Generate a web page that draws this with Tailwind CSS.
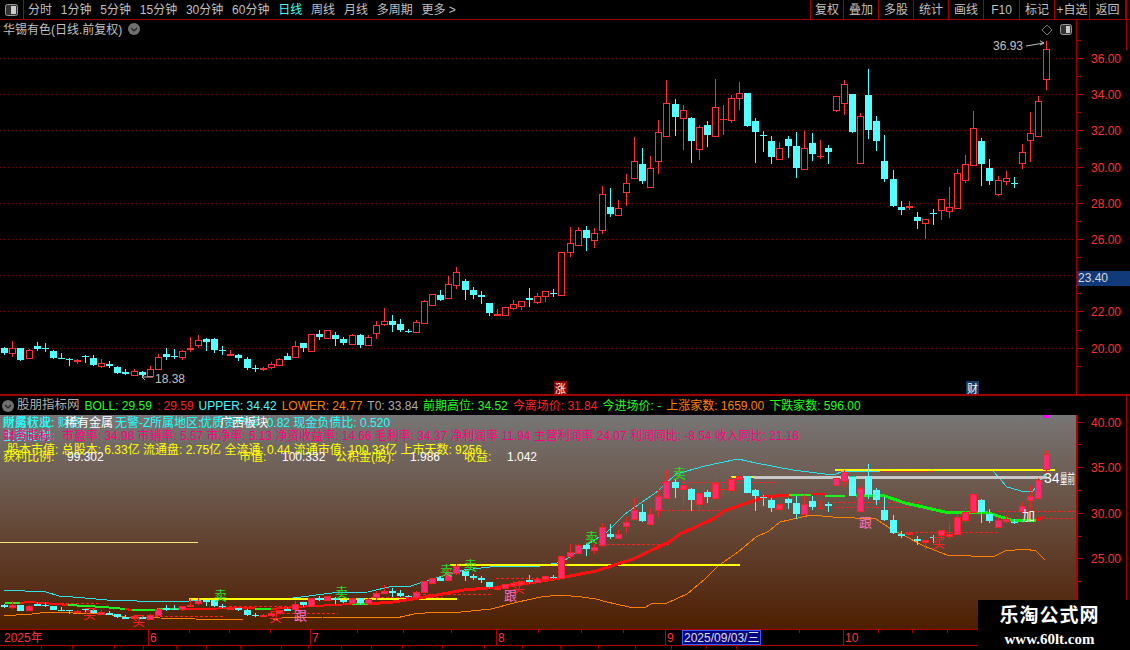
<!DOCTYPE html>
<html lang="zh">
<head>
  <meta charset="UTF-8" />
  <title>华锡有色 日线</title>
  <script src="https://cdn.jsdelivr.net/npm/@tailwindcss/browser@4"></script>
</head>
<body class="bg-black">
<div class="relative w-[1130px] h-[650px] overflow-hidden bg-black text-[#c0c0c0] text-xs [font-family:'Liberation_Sans','Noto_Sans_CJK_SC',sans-serif]">

  <!-- toolbar -->
  <header class="flex items-center h-5 border-b border-[#a00000]">
    <div class="flex items-center justify-center w-6 h-full border-r border-[#b00000]">
      <svg width="13" height="12" viewBox="0 0 13 12"><rect x="0.5" y="0.5" width="12" height="11" rx="2" fill="#333" stroke="#999"/><rect x="6" y="2" width="5" height="8" fill="#ccc"/></svg>
    </div>
    <nav class="flex items-center gap-[8.8px] pl-1 text-[12px]">
      <span>分时</span><span>1分钟</span><span>5分钟</span><span>15分钟</span><span>30分钟</span><span>60分钟</span>
      <span class="text-[#40ffff]">日线</span><span>周线</span><span>月线</span><span>多周期</span><span>更多 &gt;</span>
    </nav>
    <div class="flex items-center h-full ml-auto mr-[4px] text-[12px] border-l border-[#a00000]">
      <span class="w-[33px] h-full flex items-center justify-center border-r border-[#a00000]">复权</span>
      <span class="w-[35px] h-full flex items-center justify-center border-r border-[#a00000]">叠加</span>
      <span class="w-[35px] h-full flex items-center justify-center border-r border-[#a00000]">多股</span>
      <span class="w-[35px] h-full flex items-center justify-center border-r border-[#a00000]">统计</span>
      <span class="w-[35px] h-full flex items-center justify-center border-r border-[#a00000]">画线</span>
      <span class="w-[36px] h-full flex items-center justify-center border-r border-[#a00000]">F10</span>
      <span class="w-[35px] h-full flex items-center justify-center border-r border-[#a00000]">标记</span>
      <span class="w-[35px] h-full flex items-center justify-center border-r border-[#a00000]">+自选</span>
      <span class="w-[36px] h-full flex items-center justify-center border-r border-[#a00000]">返回</span>
    </div>
  </header>

  <!-- K line pane -->
  <section class="flex h-[376px] border-b-2 border-[#a00000]">
    <svg id="upper" class="w-[1076px] h-full shrink-0" viewBox="0 20 1076 374" shape-rendering="crispEdges">
      <g id="upperGrid"></g>
      <g id="upperCandles"></g>
      <g shape-rendering="auto">
        <text x="3" y="34" font-size="12" fill="#c0c0c0">华锡有色(日线.前复权)</text>
        <circle cx="134" cy="29" r="6" fill="#707070"/>
        <path d="M131 28l3 3 3-3" fill="none" stroke="#222" stroke-width="1.2"/>
        <path d="M1047 25l5 5-5 5-5-5z" fill="none" stroke="#777"/>
        <rect x="1060.5" y="24.5" width="11" height="10" rx="2" fill="#333" stroke="#999"/>
        <rect x="1066" y="26" width="4" height="7" fill="#ccc"/>
        <text x="993" y="50" font-size="12" fill="#c0c0c0">36.93</text>
        <path d="M1026 46l18-3M1040 41l4 2-4 2" fill="none" stroke="#c0c0c0"/>
        <text x="155" y="383" font-size="12" fill="#c0c0c0">18.38</text>
        <path d="M153 377h-11M145 374l-3 3 3 3" fill="none" stroke="#c0c0c0"/>
        <rect x="554" y="381" width="13" height="14" fill="#8b0000"/>
        <text x="555" y="393" font-size="11" fill="#fff">涨</text>
        <rect x="966" y="381" width="13" height="14" fill="#123a66"/>
        <text x="967" y="393" font-size="11" fill="#fff">财</text>
      </g>
    </svg>
    <svg id="upperAxis" class="w-[54px] h-full shrink-0 border-l border-[#a00000]" viewBox="1077 20 53 374" shape-rendering="crispEdges"></svg>
  </section>

  <!-- indicator title -->
  <div class="flex items-center gap-[5px] h-[19px] pl-[2px] text-[12px] whitespace-nowrap">
    <svg width="12" height="12" viewBox="0 0 12 12"><circle cx="6" cy="6" r="6" fill="#707070"/><path d="M3 5l3 3 3-3" fill="none" stroke="#222" stroke-width="1.2"/></svg>
    <span class="text-[#b0b0b0] text-[12.5px] -ml-[2px]">股朋指标网</span>
    <span class="text-[#20ff20]">BOLL: 29.59</span>
    <span class="text-[#ff2020]">: 29.59</span>
    <span class="text-[#40ffff]">UPPER: 34.42</span>
    <span class="text-[#ff8000]">LOWER: 24.77</span>
    <span class="text-[#b0b0b0]">T0: 33.84</span>
    <span class="text-[#20ff20]">前期高位: 34.52</span>
    <span class="text-[#ff2020]">今离场价: 31.84</span>
    <span class="text-[#20ff20]">今进场价: -</span>
    <span class="text-[#ff8000]">上涨家数: 1659.00</span>
    <span class="text-[#20ff20]">下跌家数: 596.00</span>
  </div>

  <!-- indicator pane -->
  <section class="flex h-[214px]">
    <div class="w-[1076px] h-full shrink-0 bg-linear-to-b from-[#777676] via-[#664a3a] via-50% to-[#4e1f00]">
      <svg id="lower" class="w-full h-full" viewBox="0 416 1076 214" shape-rendering="crispEdges">
        <g id="lowerBack"></g>
        <g id="lowerCandles"></g>
        <g id="lowerTop"></g>
        <g shape-rendering="auto" font-size="12">
          <text x="3" y="428" fill="#20ffff">财务状况: 财务</text>
          <text x="115" y="428" fill="#20ffff">无警-Z</text>
          <text x="200" y="428" fill="#20ffff">优质资产率: 0.82 现金负债比: 0.520</text>
          <text x="3" y="428" fill="#20ffff">所属行业:</text>
          <text x="65" y="428" fill="#ffffff">稀有金属</text>
          <text x="150" y="428" fill="#20ffff">所属地区:</text>
          <text x="220" y="428" fill="#ffffff">广西板块</text>
          <text x="3" y="441" fill="#20ffff">主营比例:</text>
          <text x="3" y="441" fill="#ff0080">财务指标:</text>
          <text x="62" y="441" fill="#ff0080" textLength="737">市盈率: 34.98 市销率: 5.57 市净率: 5.13 净资收益率: 14.66 毛利率: 34.37 净利润率 11.94 主营利润率 24.07 利润同比: -8.54 收入同比: 21.16</text>
          <text x="7" y="455" fill="#ffff00">股本市值: 总股本: 6.33亿 流通盘: 2.75亿 全流通: 0.44 流通市值: 100.33亿 上市天数: 9256</text>
          <text x="3" y="462" fill="#ffff00">获利比例:</text>
          <text x="67" y="462" fill="#ffffff">99.302</text>
          <text x="239" y="462" fill="#ffff00">市值:</text>
          <text x="282" y="462" fill="#ffffff">100.332</text>
          <text x="335" y="462" fill="#ffff00">公积金(股):</text>
          <text x="410" y="462" fill="#ffffff">1.986</text>
          <text x="464" y="462" fill="#ffff00">收益:</text>
          <text x="507" y="462" fill="#ffffff">1.042</text>
          <g fill="#20e020" font-size="13">
            <text x="214" y="601">卖</text><text x="335" y="598">卖</text><text x="440" y="576">卖</text>
            <text x="464" y="571">卖</text><text x="585" y="543">卖</text><text x="673" y="479">卖</text>
          </g>
          <g fill="#ff70c8" font-size="13">
            <text x="294" y="621">跟</text><text x="504" y="601">跟</text><text x="859" y="528">跟</text>
          </g>
          <g fill="#ff2020" font-size="13">
            <text x="83" y="619">买</text><text x="132" y="626">买</text><text x="269" y="622">买</text>
            <text x="512" y="593">买</text><text x="932" y="548">买</text>
          </g>
          <text x="1022" y="521" font-size="13" fill="#ffffff">加</text>
          <text x="1044" y="484" font-size="14" fill="#ffffff">34</text>
          <text x="1060" y="484" font-size="13" fill="#ffffff" textLength="15" lengthAdjust="spacingAndGlyphs">量前</text>
        </g>
      </svg>
    </div>
    <svg id="lowerAxis" class="w-[54px] h-full shrink-0 border-l-2 border-[#b00000]" viewBox="1078 416 52 214" shape-rendering="crispEdges"></svg>
  </section>

  <!-- date axis -->
  <svg class="block w-[1130px] h-[17px] border-y border-[#b00000]" viewBox="0 631 1130 15" shape-rendering="crispEdges">
    <path stroke="#b00000" fill="none" d="M148.5 631v15M310.5 631v15M496.5 631v15M665.5 631v15M843.5 631v15M189.5 631v3M229.5 631v3M270.5 631v3M357.5 631v3M403.5 631v3M451.5 631v3M538.5 631v3M581.5 631v3M623.5 631v3M799.5 631v3M878.5 631v3M912.5 631v3M947.5 631v3M1076.5 631v15"/>
    <rect x="682.5" y="631.5" width="78" height="14" fill="#000080" stroke="#3060ff"/>
    <g shape-rendering="auto" font-size="12" fill="#ff3232">
      <text x="4" y="643">2025年</text><text x="150" y="643">6</text><text x="312" y="643">7</text>
      <text x="498" y="643">8</text><text x="667" y="643">9</text><text x="845" y="643">10</text>
      <text x="684" y="643" fill="#e0e0e0">2025/09/03/三</text>
    </g>
  </svg>
  <div class="flex h-[3px]">
    <span class="w-[42px] border-r border-[#a00000]"></span><span class="w-[31px] border-r border-[#a00000]"></span>
    <span class="w-[42px] border-r border-[#a00000]"></span><span class="w-[29px] border-r border-[#a00000]"></span>
    <span class="w-[33px] border-r border-[#a00000]"></span><span class="w-[30px] border-r border-[#a00000]"></span>
    <span class="w-[34px] border-r border-[#a00000]"></span><span class="w-[41px] border-r border-[#a00000]"></span>
    <span class="w-[27px] border-r border-[#a00000]"></span><span class="w-[33px] border-r border-[#a00000]"></span>
    <span class="w-[30px] border-r border-[#a00000]"></span><span class="w-[31px] border-r border-[#a00000]"></span>
    <span class="w-[40px] border-r border-[#a00000]"></span><span class="w-[42px] border-r border-[#a00000]"></span>
    <span class="w-[38px] border-r border-[#a00000]"></span><span class="w-[38px] border-r border-[#a00000]"></span>
    <span class="w-[38px] border-r border-[#a00000]"></span><span class="w-[37px] border-r border-[#a00000]"></span>
    <span class="w-[36px] border-r border-[#a00000]"></span><span class="w-[35px] border-r border-[#a00000]"></span>
    <span class="w-[30px] border-r border-[#a00000]"></span>
  </div>

  <!-- right edge line -->
  <div class="absolute left-[1126px] top-[396px] w-px h-[234px] bg-[#a00000]"></div>
  <div class="absolute left-[1126px] top-0 w-px h-[50px] bg-[#a00000]"></div>

  <!-- watermark -->
  <div class="absolute left-[978px] top-[600px] w-[152px] h-[50px] bg-black flex flex-col items-center pt-[4px] pr-[9px] text-white font-bold">
    <div class="text-[19px] leading-6 tracking-[1px]">乐淘公式网</div>
    <div class="text-[15px] leading-[22px] [font-family:'Liberation_Serif',serif]">www.60lt.com</div>
  </div>
</div>

<script>
  // [color, body top, body bottom, wick top, wick bottom], page pixels of the upper pane
  const candles = [
    ['c',348,353,347,355],['r',348,353,341,357],['c',348,360,348,361],['r',350,358,349,359],['c',346,349,342,351],
    ['c',348,348,343,352],['c',351,358,350,359],['c',358,358,353,359],['c',359,359,358,366],['r',360,361,359,364],
    ['c',356,356,355,363],['c',358,365,355,366],['r',363,366,359,368],['c',364,366,361,368],['c',367,373,366,374],
    ['c',372,374,369,375],['r',371,375,369,376],['c',372,375,371,376],['r',369,376,366,376],['r',357,369,354,369],
    ['c',354,357,348,360],['c',356,356,349,359],['r',351,357,350,360],['r',348,349,337,352],['r',340,345,335,348],
    ['c',339,342,338,351],['c',339,350,338,353],['c',350,350,346,355],['r',354,356,350,356],['c',355,358,354,361],
    ['c',359,368,357,370],['c',368,368,365,372],['r',368,370,367,371],['r',364,367,362,369],['r',359,365,358,366],
    ['c',356,360,353,360],['r',346,357,341,358],['c',343,348,343,352],['r',334,351,334,352],['c',334,337,330,340],
    ['r',330,338,330,338],['c',335,339,332,346],['c',339,343,337,345],['r',335,344,334,344],['c',335,345,334,348],
    ['r',337,345,335,346],['r',325,333,321,339],['r',321,324,308,326],['c',321,325,315,332],['c',324,330,319,332],
    ['c',331,331,329,333],['r',322,332,320,333],['r',301,323,300,323],['r',294,305,294,306],['c',295,300,290,301],
    ['r',284,298,276,299],['r',272,285,267,289],['c',281,290,279,300],['c',290,295,287,299],['c',295,297,291,304],
    ['c',303,313,303,316],['r',314,316,309,316],['r',307,315,307,316],['r',304,308,300,310],['r',301,306,301,310],
    ['c',298,300,288,307],['r',296,302,293,304],['r',291,296,291,302],['c',293,293,289,297],['r',252,295,252,295],
    ['r',243,252,227,257],['r',230,245,227,245],['c',230,238,226,251],['r',233,240,228,248],['r',194,230,186,234],
    ['c',207,214,188,217],['r',208,215,200,216],['r',183,192,174,206],['r',161,178,137,178],['c',164,181,148,184],
    ['r',168,187,156,187],['r',132,161,120,174],['r',103,136,80,136],['c',104,117,99,136],['r',110,118,105,150],
    ['c',118,141,117,163],['r',127,149,125,160],['c',125,135,121,147],['r',107,136,79,136],['r',119,119,105,135],
    ['r',98,120,95,123],['r',93,98,82,110],['c',93,126,93,127],['c',121,132,118,163],['c',135,135,131,152],
    ['c',141,157,136,164],['r',148,159,142,159],['c',139,146,136,158],['c',146,168,132,178],['r',148,169,131,169],
    ['c',143,154,133,161],['r',156,156,140,159],['c',148,152,145,164],['r',96,110,96,112],['r',84,103,80,115],
    ['c',94,132,94,133],['r',116,163,113,163],['c',95,130,69,139],['c',121,141,116,151],['c',161,179,135,182],
    ['c',179,206,170,207],['c',207,210,201,215],['r',206,208,201,210],['c',217,221,212,229],['r',219,223,219,239],
    ['c',213,213,209,225],['r',199,210,199,220],['r',207,211,187,218],['r',173,208,169,208],['r',164,180,155,183],
    ['r',128,165,111,165],['c',141,164,138,186],['c',168,181,159,185],['r',180,194,176,196],['r',178,181,171,185],
    ['c',183,183,177,188],['r',152,163,144,169],['r',133,140,112,162],['r',101,136,96,137],['r',49,79,41,90]
  ];

  const NS = 'http://www.w3.org/2000/svg';
  function add(parent, tag, attrs) {
    const el = document.createElementNS(NS, tag);
    for (const k in attrs) el.setAttribute(k, attrs[k]);
    parent.appendChild(el);
    return el;
  }
  function line(parent, pts, color, width, dash) {
    const attrs = { points: pts, fill: 'none', stroke: color, 'stroke-width': width || 1 };
    if (dash) attrs['stroke-dasharray'] = dash;
    add(parent, 'polyline', attrs);
  }

  function drawCandles(group, toY, fillRed, redColor) {
    candles.forEach((c, i) => {
      const x = Math.round(4.3 + 8.075 * i);
      const bodyTop = toY(c[1]), bodyBot = toY(c[2]), wt = toY(c[3]), wb = toY(c[4]);
      const color = c[0] === 'r' ? redColor : '#55ffff';
      add(group, 'rect', { x: x, y: wt, width: 1, height: Math.max(wb - wt, 1), fill: color });
      if (c[2] - c[1] < 1) {
        add(group, 'rect', { x: x - 3, y: bodyTop, width: 7, height: 1, fill: color });
      } else if (c[0] === 'c') {
        add(group, 'rect', { x: x - 3, y: bodyTop, width: 7, height: Math.max(bodyBot - bodyTop, 2), fill: color });
      } else if (c[2] - c[1] <= 2) {
        add(group, 'rect', { x: x - 3, y: bodyTop, width: 7, height: 2, fill: color });
      } else {
        add(group, 'rect', { x: x - 2.5, y: bodyTop + 0.5, width: 6, height: Math.max(bodyBot - bodyTop, 2), fill: fillRed, stroke: color });
      }
    });
  }

  // upper pane
  const upperY = [58, 94, 130, 167, 203, 239, 275, 311, 348];
  const upperGrid = document.getElementById('upperGrid');
  upperY.forEach(y => add(upperGrid, 'line', { x1: 0, x2: 1076, y1: y + 0.5, y2: y + 0.5, stroke: '#780000', 'stroke-dasharray': '1 3' }));
  drawCandles(document.getElementById('upperCandles'), y => Math.round(y), '#000000', '#ff3232');

  const upperAxis = document.getElementById('upperAxis');
  const labels = { 58: '36.00', 94: '34.00', 130: '32.00', 167: '30.00', 203: '28.00', 239: '26.00', 311: '22.00', 348: '20.00' };
  for (const y in labels) {
    add(upperAxis, 'rect', { x: 1077, y: +y, width: 7, height: 1, fill: '#b00000' });
    add(upperAxis, 'text', { x: 1091, y: +y + 5, 'font-size': 12, fill: '#ff3232' }).textContent = labels[y];
  }
  [40, 76, 112, 148, 185, 221, 257, 293, 330, 366].forEach(y => add(upperAxis, 'rect', { x: 1077, y: y, width: 4, height: 1, fill: '#b00000' }));
  add(upperAxis, 'rect', { x: 1077, y: 271, width: 53, height: 15, fill: '#103a7a' });
  add(upperAxis, 'text', { x: 1078, y: 282, 'font-size': 12, fill: '#d8d8d8' }).textContent = '23.40';

  // lower pane
  const back = document.getElementById('lowerBack');
  const over = document.getElementById('lowerTop');

  const dashes = [
    [662,511,720], [662,483,775], [998,512,1075], [1040,519,1075], [960,533,1000], [833,503,924], [836,508,909],
    [840,472,934], [607,545,669], [905,533,1000], [36,604,100], [150,617,223], [229,607,293], [282,614,338],
    [371,598,443], [418,595,491], [496,579,554]
  ];
  dashes.forEach(d => line(back, d[0] + ',' + d[1] + ' ' + d[2] + ',' + d[1], '#ff2020', 1, '3 2'));

  // upper band
  line(back, '4,591 25,592 46,593 59,597 73,598 96,600 107,601 137,602 170,603 189,602 225,599 282,599 293,599 332,594 368,593 389,588 411,587 436,579 464,571 490,568 518,567 540,567 557,564 565,561 596,540 607,533 625,515 658,492 676,475 705,467 738,460 756,464 793,471 833,476 844,472 880,472 971,471 993,472 1007,488 1025,493 1033,492 1045,475', '#30e0e8');
  // lower band
  line(back, '4,617 16,616 32,615 48,613 73,614 105,615 125,618 195,620 243,621 273,621 282,619 323,618 380,618 396,619 414,615 436,613 461,613 491,610 518,603 541,598 560,596 582,598 596,600 607,603 629,608 644,609 651,605 667,604 687,595 705,580 718,567 738,553 756,538 769,532 780,523 789,521 811,516 833,518 876,520 891,530 905,537 924,547 947,556 971,557 993,558 1005,552 1025,550 1036,552 1045,561', '#ff8000');

  // level lines sit above the bands
  line(back, '0,543 198,543', '#f7e27a');
  line(back, '189,600 457,600', '#ffff00', 2);
  line(back, '450,566 740,566', '#ffff00', 2);
  line(back, '731,478 833,478', '#ffff00', 2);
  line(back, '835,471 1055,471', '#ffff00', 2);
  line(back, '754,478 1047,478', '#c8c8c8', 3);

  // middle band, red while rising and green while falling
  line(back, '5,604 20,604', '#20f020', 2);
  line(back, '20,604 29,603 68,606', '#ff1010', 2);
  line(back, '68,606 104,608 125,610', '#20f020', 2);
  line(back, '125,610 132,611', '#ff1010', 2);
  line(back, '132,611 182,610', '#20f020', 2);
  line(back, '182,610 255,609', '#ff1010', 2);
  line(back, '255,610 271,610', '#20f020', 2);
  line(back, '271,610 296,608 352,605', '#ff1010', 2);
  line(back, '352,605 368,605', '#20f020', 2);
  line(back, '368,605 393,603 432,597 464,591 500,588 536,583 560,579 596,572 633,560 669,543 680,535 713,520 724,512 764,498 789,496', '#ff1010', 3);
  line(back, '789,496 811,496', '#20f020', 2);
  line(back, '811,495 825,495', '#ff1010', 2);
  line(back, '825,497 845,497', '#20f020', 2);
  add(back, 'rect', { x: 849, y: 477, width: 7, height: 20, fill: '#00e070' });
  line(back, '856,496 885,497 905,504 945,513 964,514 985,513 1011,521 1036,521', '#10f010', 3);
  line(back, '1036,521 1044,518', '#ff1010', 3);

  drawCandles(document.getElementById('lowerCandles'), y => Math.round(459.5 + (y - 58) * 0.5044), '#ff2a70', '#ff2020');
  add(over, 'rect', { x: 1043, y: 416, width: 6, height: 3, fill: '#ff00ff' });

  const lowerAxis = document.getElementById('lowerAxis');
  const lowLabels = { 423: '40.00', 468: '35.00', 514: '30.00', 559: '25.00' };
  for (const y in lowLabels) {
    add(lowerAxis, 'rect', { x: 1078, y: +y, width: 6, height: 1, fill: '#b00000' });
    add(lowerAxis, 'text', { x: 1091, y: +y + 5, 'font-size': 12, fill: '#ff3232' }).textContent = lowLabels[y];
  }
  [445, 491, 537, 582].forEach(y => add(lowerAxis, 'rect', { x: 1078, y: y, width: 4, height: 1, fill: '#b00000' }));
</script>
</body>
</html>
